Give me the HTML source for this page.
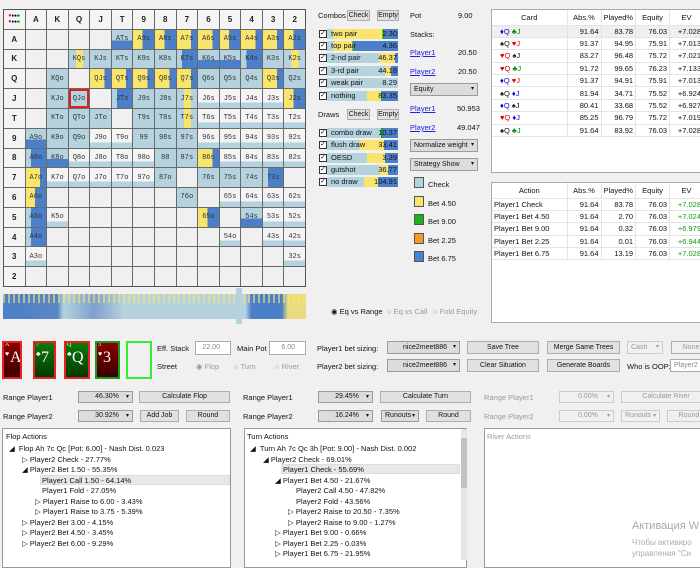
<!DOCTYPE html>
<html><head><meta charset="utf-8"><style>
*{box-sizing:border-box;margin:0;padding:0}
body{width:700px;height:560px;background:#f0f0f0;font-family:"Liberation Sans",sans-serif;font-size:7.5px;color:#111;position:relative;overflow:hidden}
.a{position:absolute;white-space:nowrap}
#grid{position:absolute;left:3px;top:9px;width:303px;height:278px;display:grid;grid-template-columns:repeat(14,1fr);grid-template-rows:repeat(14,1fr);gap:1px;background:#6a6a6a;border:1px solid #555}
#grid div{background:#f0f0f0;font-family:"Liberation Mono",monospace;font-size:7px;display:flex;align-items:center;justify-content:center;color:#333;overflow:hidden}
#grid .h{background:#f4f4f4;font-family:"Liberation Sans",sans-serif;font-weight:bold;font-size:8px;color:#222}
#grid .l{background:#b5d2df}
#grid .w{background:linear-gradient(#f4f4f4 70%,#b5d2df 70%)}
#grid .y{background:linear-gradient(90deg,#f9e46c 70%,#4b7fc8 70%)}
#grid .m{background:linear-gradient(90deg,#f9e46c 45%,#4b7fc8 45%)}
#grid .d{background:linear-gradient(90deg,#b5d2df 25%,#4b7fc8 25%)}
#grid .lb{background:linear-gradient(#b5d2df 55%,#4b7fc8 55%)}
#grid .ly{background:linear-gradient(90deg,#b5d2df 35%,#f9e46c 35%,#f9e46c 70%,#b5d2df 70%)}
#grid .r{outline:2px solid #e02020;outline-offset:-2px}
.btn{position:absolute;background:#e1e1e1;border:1px solid #adadad;text-align:center;font-size:7px;line-height:9px;white-space:nowrap;overflow:hidden}
.dd{position:absolute;background:#dcdcdc;border:1px solid #9a9a9a;font-size:7px;padding-left:3px;white-space:nowrap}
.dd:after{content:"▾";position:absolute;right:3px;font-size:6px}
.cb{position:absolute;width:8px;height:8px;border:1px solid #333;background:#fff;font-size:7px;line-height:6px;text-align:center}
.bar{position:absolute;height:10px;left:327px;width:71px;font-size:7.5px;line-height:10px;padding-left:4px}
.bar span{position:absolute;right:1px;top:0}
.lnk{color:#2222dd;text-decoration:underline}
table{border-collapse:collapse;font-size:7.5px}
.tbl{position:absolute;background:#fff;border:1px solid #aaa}
.tbl td,.tbl th{height:12.4px;padding:0 2px;text-align:right;border-right:1px solid #e4e4e4;border-bottom:1px solid #e4e4e4;font-weight:normal}
.tbl th{text-align:center;background:#fff;height:15px}
.lg{position:absolute;left:414px;width:10px;height:11px;border:1px solid #555}
.panel{position:absolute;background:#fff;border:1px solid #999;top:428px;height:140px}
.t{position:absolute;font-size:7.5px;white-space:nowrap}
.card{position:absolute;top:341px;height:38px;border:2px solid #e82020;color:#fff;font-family:"Liberation Serif",serif;overflow:hidden}
.card b{position:absolute;left:1px;top:-1px;font-size:6px;font-weight:normal}
.card s{position:absolute;left:1px;top:7px;font-size:7px;text-decoration:none}
.card i{position:absolute;left:6px;top:6px;font-size:16px;font-style:normal}
.inp{position:absolute;background:#fff;border:1px solid #aaa;color:#888;font-size:7px;text-align:right;padding-right:10px;line-height:12px}
.g{color:#999}
</style></head><body>

<div id="grid">
<div class="h" style="font-size:5px;line-height:6px;flex-direction:column"><span style="color:#d00">♥<span style="color:#00c">♦</span><span style="color:#000">♠</span><span style="color:#0a0">♣</span></span><span style="color:#d00">♥<span style="color:#00c">♦</span><span style="color:#000">♠</span><span style="color:#0a0">♣</span></span></div>
<div class="h">A</div><div class="h">K</div><div class="h">Q</div><div class="h">J</div><div class="h">T</div><div class="h">9</div><div class="h">8</div><div class="h">7</div><div class="h">6</div><div class="h">5</div><div class="h">4</div><div class="h">3</div><div class="h">2</div>
<div class="h">A</div><div></div><div></div><div></div><div></div><div class="lb">ATs</div><div class="m">A9s</div><div class="m">A8s</div><div class="y">A7s</div><div class="y">A6s</div><div class="m">A5s</div><div class="y">A4s</div><div class="y">A3s</div><div class="m">A2s</div>
<div class="h">K</div><div></div><div></div><div class="ly">KQs</div><div class="l">KJs</div><div class="l">KTs</div><div class="l">K9s</div><div class="l">K8s</div><div class="d">K7s</div><div class="lb">K6s</div><div class="lb">K5s</div><div class="d">K4s</div><div class="l">K3s</div><div class="ly">K2s</div>
<div class="h">Q</div><div></div><div class="l">KQo</div><div></div><div class="y">QJs</div><div class="y">QTs</div><div class="y">Q9s</div><div class="y">Q8s</div><div class="y">Q7s</div><div class="l">Q6s</div><div class="l">Q5s</div><div class="l">Q4s</div><div class="y">Q3s</div><div class="l">Q2s</div>
<div class="h">J</div><div></div><div class="l">KJo</div><div class="l r">QJo</div><div></div><div class="d">JTs</div><div class="l">J9s</div><div class="l">J8s</div><div class="ly">J7s</div><div class="w">J6s</div><div class="w">J5s</div><div class="w">J4s</div><div class="w">J3s</div><div class="m">J2s</div>
<div class="h">T</div><div></div><div class="l">KTo</div><div class="l">QTo</div><div class="l">JTo</div><div></div><div class="l">T9s</div><div class="l">T8s</div><div class="ly">T7s</div><div class="w">T6s</div><div class="w">T5s</div><div class="w">T4s</div><div class="w">T3s</div><div class="w">T2s</div>
<div class="h">9</div><div class="lb">A9o</div><div class="l">K9o</div><div class="l">Q9o</div><div class="w">J9o</div><div class="w">T9o</div><div class="l">99</div><div class="l">98s</div><div class="l">97s</div><div class="w">96s</div><div class="w">95s</div><div class="w">94s</div><div class="w">93s</div><div class="w">92s</div>
<div class="h">8</div><div class="d">A8o</div><div class="lb">K8o</div><div class="w">Q8o</div><div class="w">J8o</div><div class="w">T8o</div><div class="w">98o</div><div class="l">88</div><div class="l">87s</div><div class="y">86s</div><div class="w">85s</div><div class="w">84s</div><div class="w">83s</div><div class="w">82s</div>
<div class="h">7</div><div class="y">A7o</div><div class="w">K7o</div><div class="w">Q7o</div><div class="w">J7o</div><div class="w">T7o</div><div class="w">97o</div><div class="l">87o</div><div></div><div class="l">76s</div><div class="l">75s</div><div class="l">74s</div><div class="d">73s</div><div></div>
<div class="h">6</div><div class="m">A6o</div><div></div><div></div><div></div><div></div><div></div><div></div><div class="l">76o</div><div></div><div class="w">65s</div><div class="w">64s</div><div class="w">63s</div><div class="w">62s</div>
<div class="h">5</div><div class="d">A5o</div><div class="w">K5o</div><div></div><div></div><div></div><div></div><div></div><div></div><div class="m">65o</div><div></div><div class="lb">54s</div><div class="w">53s</div><div class="w">52s</div>
<div class="h">4</div><div class="d">A4o</div><div></div><div></div><div></div><div></div><div></div><div></div><div></div><div></div><div class="w">54o</div><div></div><div class="w">43s</div><div class="w">42s</div>
<div class="h">3</div><div class="w">A3o</div><div></div><div></div><div></div><div></div><div></div><div></div><div></div><div></div><div></div><div></div><div></div><div class="w">32s</div>
<div class="h">2</div><div></div><div></div><div></div><div></div><div></div><div></div><div></div><div></div><div></div><div></div><div></div><div></div><div></div>
</div>

<div class="a" style="left:3px;top:294px;width:303px;height:25px;background:linear-gradient(90deg,#4b7fc8 0,#5b86c4 18%,#b5d2df 20%,#7fa0cc 30%,#b5d2df 40%,#b5d2df 80%,#4b7fc8 82%,#4b7fc8 92%,#e9dc80 94%)"></div>
<div class="a" style="left:3px;top:294px;width:303px;height:9px;background:repeating-linear-gradient(90deg,#f9e46c 0 2px,transparent 2px 5px);opacity:.6"></div>
<div class="a" style="left:236px;top:288px;width:6px;height:36px;background:#b5d2df"></div>

<div class="a" style="left:318px;top:11px">Combos</div>
<div class="btn" style="left:347px;top:10px;width:23px;height:11px">Check</div>
<div class="btn" style="left:377px;top:10px;width:22px;height:11px">Empty</div>
<div class="cb" style="left:319px;top:30px">✓</div><div class="bar" style="top:29px;background:linear-gradient(90deg,#b5d2df 8%,#f9e46c 8%,#f9e46c 78%,#0a0 78%,#0a0 80%,#4b7fc8 80%)">two pair<span>2.30</span></div>
<div class="cb" style="left:319px;top:42px">✓</div><div class="bar" style="top:41px;background:linear-gradient(90deg,#b5d2df 10%,#f9e46c 10%,#f9e46c 36%,#0a0 36%,#0a0 37%,#4b7fc8 37%)">top pair<span>4.36</span></div>
<div class="cb" style="left:319px;top:54px">✓</div><div class="bar" style="top:53px;background:linear-gradient(90deg,#b5d2df 74%,#f9e46c 74%,#f9e46c 96%,#4b7fc8 96%)">2-nd pair<span>46.37</span></div>
<div class="cb" style="left:319px;top:67px">✓</div><div class="bar" style="top:66px;background:linear-gradient(90deg,#b5d2df 82%,#f9e46c 82%,#f9e46c 90%,#4b7fc8 90%)">3-rd pair<span>44.18</span></div>
<div class="cb" style="left:319px;top:79px">✓</div><div class="bar" style="top:78px;background:#b5d2df">weak pair<span>8.29</span></div>
<div class="cb" style="left:319px;top:92px">✓</div><div class="bar" style="top:91px;background:linear-gradient(90deg,#b5d2df 56%,#f9e46c 56%,#f9e46c 76%,#0a0 76%,#0a0 77%,#4b7fc8 77%)">nothing<span>83.35</span></div>
<div class="a" style="left:318px;top:110px">Draws</div>
<div class="btn" style="left:347px;top:109px;width:23px;height:11px">Check</div>
<div class="btn" style="left:377px;top:109px;width:22px;height:11px">Empty</div>
<div class="cb" style="left:319px;top:129px">✓</div><div class="bar" style="top:128px;background:linear-gradient(90deg,#b5d2df 76%,#0a0 76%,#0a0 78%,#4b7fc8 78%)">combo draw<span>10.37</span></div>
<div class="cb" style="left:319px;top:141px">✓</div><div class="bar" style="top:140px;background:linear-gradient(90deg,#b5d2df 46%,#f9e46c 46%,#f9e46c 80%,#4b7fc8 80%)">flush draw<span>33.41</span></div>
<div class="cb" style="left:319px;top:154px">✓</div><div class="bar" style="top:153px;background:linear-gradient(90deg,#b5d2df 56%,#f9e46c 56%,#f9e46c 82%,#4b7fc8 82%)">OESD<span>3.39</span></div>
<div class="cb" style="left:319px;top:166px">✓</div><div class="bar" style="top:165px;background:linear-gradient(90deg,#b5d2df 74%,#f9e46c 74%,#f9e46c 86%,#4b7fc8 86%)">gutshot<span>36.77</span></div>
<div class="cb" style="left:319px;top:178px">✓</div><div class="bar" style="top:177px;background:linear-gradient(90deg,#b5d2df 52%,#f9e46c 52%,#f9e46c 72%,#4b7fc8 72%)">no draw<span>104.91</span></div>

<div class="a" style="left:410px;top:11px">Pot</div><div class="a" style="left:458px;top:11px">9.00</div>
<div class="a" style="left:410px;top:30px">Stacks:</div>
<div class="a lnk" style="left:410px;top:48px">Player1</div><div class="a" style="left:458px;top:48px">20.50</div>
<div class="a lnk" style="left:410px;top:67px">Player2</div><div class="a" style="left:458px;top:67px">20.50</div>
<div class="dd" style="left:410px;top:83px;width:68px;height:13px;line-height:11px">Equity</div>
<div class="a lnk" style="left:410px;top:104px">Player1</div><div class="a" style="left:457px;top:104px">50.953</div>
<div class="a lnk" style="left:410px;top:123px">Player2</div><div class="a" style="left:457px;top:123px">49.047</div>
<div class="dd" style="left:410px;top:139px;width:68px;height:13px;line-height:11px">Normalize weight</div>
<div class="dd" style="left:410px;top:158px;width:68px;height:13px;line-height:11px">Strategy Show</div>
<div class="lg" style="top:177px;background:#b5d2df"></div><div class="a" style="left:428px;top:180px">Check</div>
<div class="lg" style="top:196px;background:#f9e46c"></div><div class="a" style="left:428px;top:199px">Bet 4.50</div>
<div class="lg" style="top:214px;background:#1fb21f"></div><div class="a" style="left:428px;top:217px">Bet 9.00</div>
<div class="lg" style="top:233px;background:#f59a2a"></div><div class="a" style="left:428px;top:236px">Bet 2.25</div>
<div class="lg" style="top:251px;background:#4b7fc8"></div><div class="a" style="left:428px;top:254px">Bet 6.75</div>

<div class="a" style="left:331px;top:307px">◉ Eq vs Range</div>
<div class="a g" style="left:387px;top:307px">○ Eq vs Call</div>
<div class="a g" style="left:433px;top:307px">○ Fold Equity</div>

<div class="tbl" style="left:491px;top:9px;width:212px;height:164px">
<table style="width:212px">
<tr><th style="width:75px">Card</th><th style="width:34px">Abs.%</th><th style="width:34px">Played%</th><th style="width:34px">Equity</th><th>EV</th></tr>
<tr style="background:#efefef"><td style="text-align:left;padding-left:8px"><span style="color:#00c">♦Q</span> <span style="color:#080">♣J</span></td><td>91.64</td><td>83.78</td><td>76.03</td><td>+7.028</td></tr>
<tr><td style="text-align:left;padding-left:8px">♠Q <span style="color:#d00">♥J</span></td><td>91.37</td><td>94.95</td><td>75.91</td><td>+7.013</td></tr>
<tr><td style="text-align:left;padding-left:8px"><span style="color:#d00">♥Q</span> ♠J</td><td>83.27</td><td>96.48</td><td>75.72</td><td>+7.021</td></tr>
<tr><td style="text-align:left;padding-left:8px"><span style="color:#d00">♥Q</span> <span style="color:#080">♣J</span></td><td>91.72</td><td>99.65</td><td>76.23</td><td>+7.133</td></tr>
<tr><td style="text-align:left;padding-left:8px"><span style="color:#00c">♦Q</span> <span style="color:#d00">♥J</span></td><td>91.37</td><td>94.91</td><td>75.91</td><td>+7.013</td></tr>
<tr><td style="text-align:left;padding-left:8px">♠Q <span style="color:#00c">♦J</span></td><td>81.94</td><td>34.71</td><td>75.52</td><td>+6.924</td></tr>
<tr><td style="text-align:left;padding-left:8px"><span style="color:#00c">♦Q</span> ♠J</td><td>80.41</td><td>33.68</td><td>75.52</td><td>+6.927</td></tr>
<tr><td style="text-align:left;padding-left:8px"><span style="color:#d00">♥Q</span> <span style="color:#00c">♦J</span></td><td>85.25</td><td>96.79</td><td>75.72</td><td>+7.019</td></tr>
<tr><td style="text-align:left;padding-left:8px">♠Q <span style="color:#080">♣J</span></td><td>91.64</td><td>83.92</td><td>76.03</td><td>+7.028</td></tr>
</table></div>

<div class="tbl" style="left:491px;top:182px;width:212px;height:141px">
<table style="width:212px">
<tr><th style="width:75px">Action</th><th style="width:34px">Abs.%</th><th style="width:34px">Played%</th><th style="width:34px">Equity</th><th>EV</th></tr>
<tr><td style="text-align:left">Player1 Check</td><td>91.64</td><td>83.78</td><td>76.03</td><td style="color:#1a9a1a">+7.028</td></tr>
<tr><td style="text-align:left">Player1 Bet 4.50</td><td>91.64</td><td>2.70</td><td>76.03</td><td style="color:#1a9a1a">+7.024</td></tr>
<tr><td style="text-align:left">Player1 Bet 9.00</td><td>91.64</td><td>0.32</td><td>76.03</td><td style="color:#1a9a1a">+6.979</td></tr>
<tr><td style="text-align:left">Player1 Bet 2.25</td><td>91.64</td><td>0.01</td><td>76.03</td><td style="color:#1a9a1a">+6.944</td></tr>
<tr><td style="text-align:left">Player1 Bet 6.75</td><td>91.64</td><td>13.19</td><td>76.03</td><td style="color:#1a9a1a">+7.028</td></tr>
</table></div>

<div class="card" style="left:2px;width:20px;background:linear-gradient(#8a0000,#3a0000)"><b>A</b><s>♥</s><i>A</i></div>
<div class="card" style="left:33px;width:23px;background:linear-gradient(#0a7a0a,#033a03)"><b>7</b><s>♣</s><i>7</i></div>
<div class="card" style="left:64px;width:26px;background:linear-gradient(#0a7a0a,#033a03)"><b>Q</b><s>♣</s><i>Q</i></div>
<div class="card" style="left:95px;width:25px;background:linear-gradient(#8a0000,#3a0000);border-color:#1c9a1c"><b>3</b><s>♥</s><i>3</i></div>
<div class="card" style="left:126px;width:26px;background:#f0f0f0;border-color:#33ee33"></div>

<div class="a" style="left:157px;top:344px">Eff. Stack</div>
<div class="inp" style="left:195px;top:341px;width:36px;height:14px">22.00</div>
<div class="a" style="left:237px;top:344px">Main Pot</div>
<div class="inp" style="left:269px;top:341px;width:37px;height:14px">6.00</div>
<div class="a" style="left:157px;top:362px">Street</div>
<div class="a g" style="left:196px;top:362px">◉ Flop</div>
<div class="a g" style="left:234px;top:362px">○ Turn</div>
<div class="a g" style="left:275px;top:362px">○ River</div>
<div class="a" style="left:317px;top:344px">Player1 bet sizing:</div>
<div class="a" style="left:317px;top:362px">Player2 bet sizing:</div>
<div class="dd" style="left:387px;top:341px;width:73px;height:13px;line-height:11px;text-align:center">nice2meet886</div>
<div class="dd" style="left:387px;top:359px;width:73px;height:13px;line-height:11px;text-align:center">nice2meet886</div>
<div class="btn" style="left:467px;top:341px;width:72px;height:13px;line-height:11px">Save Tree</div>
<div class="btn" style="left:547px;top:341px;width:73px;height:13px;line-height:11px">Merge Same Trees</div>
<div class="btn" style="left:467px;top:359px;width:72px;height:13px;line-height:11px">Clear Situation</div>
<div class="btn" style="left:547px;top:359px;width:73px;height:13px;line-height:11px">Generate Boards</div>
<div class="dd g" style="left:627px;top:341px;width:36px;height:13px;line-height:11px;background:#f0f0f0;border-color:#ccc">Cash</div>
<div class="btn g" style="left:671px;top:341px;width:40px;height:13px;line-height:11px;background:#f0f0f0">None</div>
<div class="a" style="left:627px;top:362px">Who is OOP:</div>
<div class="inp" style="left:670px;top:359px;width:40px;height:13px;text-align:left;padding-left:3px">Player2</div>

<div class="a" style="left:3px;top:393px">Range Player1</div>
<div class="a" style="left:3px;top:412px">Range Player2</div>
<div class="dd" style="left:78px;top:391px;width:55px;height:12px;line-height:10px;text-align:center">46.30%</div>
<div class="dd" style="left:78px;top:410px;width:55px;height:12px;line-height:10px;text-align:center">30.92%</div>
<div class="btn" style="left:139px;top:391px;width:91px;height:12px">Calculate Flop</div>
<div class="btn" style="left:140px;top:410px;width:39px;height:12px">Add Job</div>
<div class="btn" style="left:186px;top:410px;width:44px;height:12px">Round</div>
<div class="a" style="left:243px;top:393px">Range Player1</div>
<div class="a" style="left:243px;top:412px">Range Player2</div>
<div class="dd" style="left:318px;top:391px;width:55px;height:12px;line-height:10px;text-align:center">29.45%</div>
<div class="dd" style="left:318px;top:410px;width:55px;height:12px;line-height:10px;text-align:center">16.24%</div>
<div class="btn" style="left:380px;top:391px;width:91px;height:12px">Calculate Turn</div>
<div class="dd" style="left:381px;top:410px;width:38px;height:12px;line-height:10px">Runouts</div>
<div class="btn" style="left:426px;top:410px;width:45px;height:12px">Round</div>
<div class="a g" style="left:484px;top:393px">Range Player1</div>
<div class="a g" style="left:484px;top:412px">Range Player2</div>
<div class="dd g" style="left:559px;top:391px;width:55px;height:12px;line-height:10px;text-align:center;background:#f0f0f0;border-color:#ccc">0.00%</div>
<div class="dd g" style="left:559px;top:410px;width:55px;height:12px;line-height:10px;text-align:center;background:#f0f0f0;border-color:#ccc">0.00%</div>
<div class="btn g" style="left:621px;top:391px;width:90px;height:12px;background:#f0f0f0;border-color:#ccc">Calculate River</div>
<div class="dd g" style="left:621px;top:410px;width:39px;height:12px;line-height:10px;background:#f0f0f0;border-color:#ccc">Runouts</div>
<div class="btn g" style="left:667px;top:410px;width:44px;height:12px;background:#f0f0f0;border-color:#ccc">Round</div>

<div class="panel" style="left:2px;width:229px"></div>
<div class="panel" style="left:244px;width:223px"></div>
<div class="a" style="left:461px;top:429px;width:6px;height:131px;background:#e6e6e6"></div>
<div class="a" style="left:461px;top:438px;width:6px;height:50px;background:#c2c2c2"></div>
<div class="panel" style="left:484px;width:230px"></div>

<div class="a" style="left:40px;top:475px;width:190px;height:10px;background:#e8e8e8;border:1px solid #ddd"></div>
<div class="a" style="left:281px;top:464px;width:179px;height:10px;background:#e8e8e8;border:1px solid #ddd"></div>

<div class="t" style="left:6px;top:432px">Flop Actions</div>
<div class="t" style="left:9px;top:444px">◢ &nbsp;Flop Ah 7c Qc [Pot: 6.00] - Nash Dist. 0.023</div>
<div class="t" style="left:22px;top:455px">▷ Player2 Check - 27.77%</div>
<div class="t" style="left:22px;top:465px">◢ Player2 Bet 1.50 - 55.35%</div>
<div class="t" style="left:42px;top:476px">Player1 Call 1.50 - 64.14%</div>
<div class="t" style="left:42px;top:486px">Player1 Fold - 27.05%</div>
<div class="t" style="left:35px;top:497px">▷ Player1 Raise to 6.00 - 3.43%</div>
<div class="t" style="left:35px;top:507px">▷ Player1 Raise to 3.75 - 5.39%</div>
<div class="t" style="left:22px;top:518px">▷ Player2 Bet 3.00 - 4.15%</div>
<div class="t" style="left:22px;top:528px">▷ Player2 Bet 4.50 - 3.45%</div>
<div class="t" style="left:22px;top:539px">▷ Player2 Bet 6.00 - 9.29%</div>

<div class="t" style="left:247px;top:432px">Turn Actions</div>
<div class="t" style="left:250px;top:444px">◢ &nbsp;Turn Ah 7c Qc 3h [Pot: 9.00] - Nash Dist. 0.002</div>
<div class="t" style="left:263px;top:455px">◢ Player2 Check - 69.01%</div>
<div class="t" style="left:283px;top:465px">Player1 Check - 55.69%</div>
<div class="t" style="left:275px;top:476px">◢ Player1 Bet 4.50 - 21.67%</div>
<div class="t" style="left:296px;top:486px">Player2 Call 4.50 - 47.82%</div>
<div class="t" style="left:296px;top:497px">Player2 Fold - 43.56%</div>
<div class="t" style="left:288px;top:507px">▷ Player2 Raise to 20.50 - 7.35%</div>
<div class="t" style="left:288px;top:518px">▷ Player2 Raise to 9.00 - 1.27%</div>
<div class="t" style="left:275px;top:528px">▷ Player1 Bet 9.00 - 0.66%</div>
<div class="t" style="left:275px;top:539px">▷ Player1 Bet 2.25 - 0.03%</div>
<div class="t" style="left:275px;top:549px">▷ Player1 Bet 6.75 - 21.95%</div>

<div class="t g" style="left:487px;top:432px">River Actions</div>
<div class="a" style="left:632px;top:520px;font-size:11px;color:#aaa">Активация W</div>
<div class="a" style="left:632px;top:538px;font-size:8px;color:#aaa">Чтобы активиро</div>
<div class="a" style="left:632px;top:549px;font-size:8px;color:#aaa">управления "Си</div>
</body></html>
